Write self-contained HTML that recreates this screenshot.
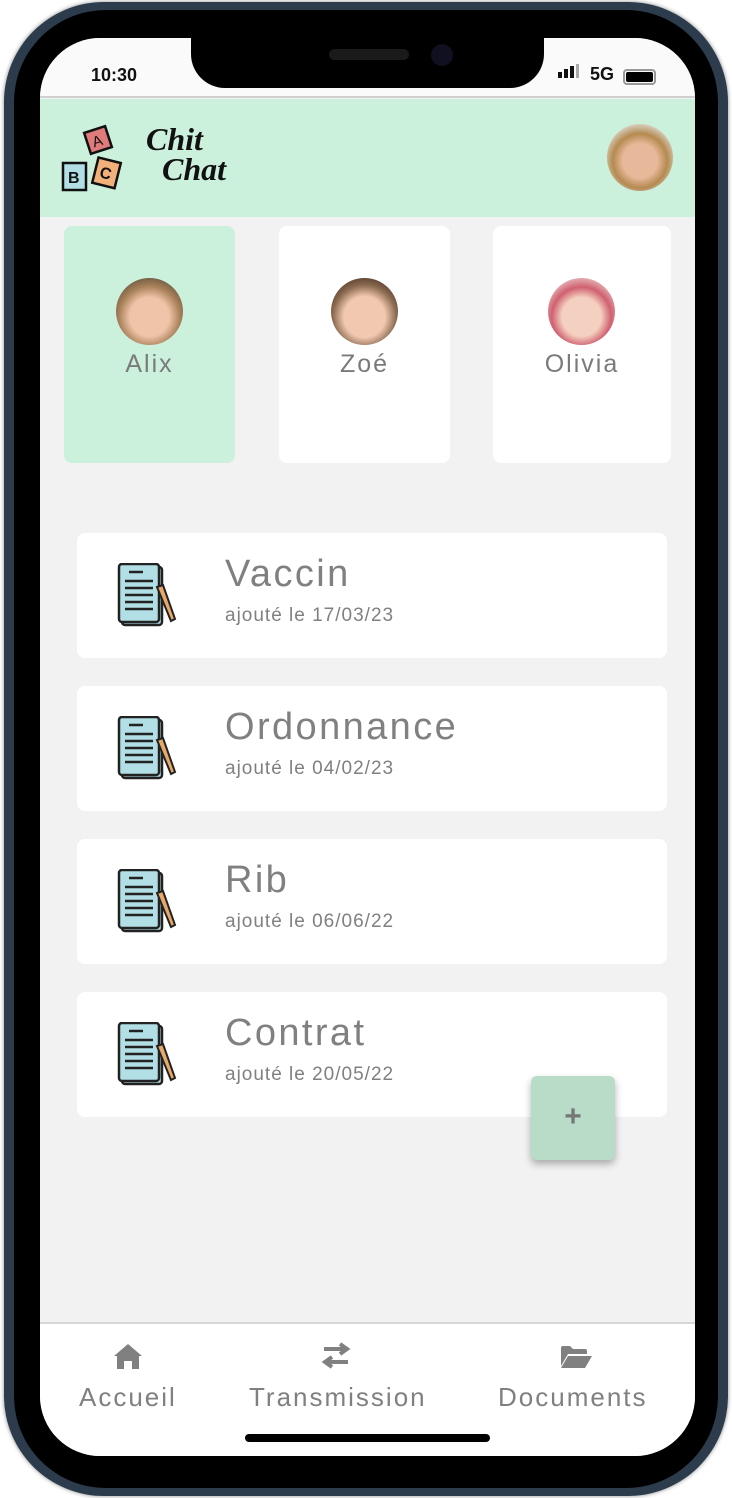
<!DOCTYPE html>
<html><head><meta charset="utf-8"><style>
*{margin:0;padding:0;box-sizing:border-box}
body{width:732px;height:1498px;background:#fff;position:relative;overflow:hidden;font-family:"Liberation Sans",sans-serif;color:#7a7a7a}
.phone{position:absolute;left:4px;top:2px;width:724px;height:1494px;border-radius:100px;background:#2c3c4c;box-shadow:0 0 4px #888}
.bezel{position:absolute;left:10px;top:8px;right:10px;bottom:8px;border-radius:92px;background:#000}
.screen{position:absolute;left:40px;top:38px;width:655px;height:1418px;border-radius:60px;overflow:hidden;background:#f3f2f3}
.status{position:absolute;left:0;top:0;width:100%;height:60px;background:#fafafa;border-bottom:2px solid #cfcfcf}
.notch{position:absolute;left:151px;top:-2px;width:353px;height:52px;background:#000;border-radius:0 0 34px 34px}
.header{position:absolute;top:61px;left:0;width:100%;height:118px;background:#cbf0dc}
.card{position:absolute;top:188px;height:237px;background:#fff;border-radius:8px}
.av{position:absolute;left:50%;top:52px;margin-left:-34px;width:67px;height:67px;border-radius:50%}
.name{position:absolute;top:124px;width:100%;text-align:center;font-size:25px;letter-spacing:2px}
.doc{position:absolute;left:37px;width:590px;height:125px;background:#fff;border-radius:8px}
.doc .t{position:absolute;left:148px;top:20px;font-size:38px;color:#808080;letter-spacing:2.4px}
.doc .s{position:absolute;left:148px;top:72px;font-size:19px;color:#808080;letter-spacing:1px}
.doc svg{position:absolute;left:40px;top:30px}
.nav{position:absolute;top:1284px;left:0;width:100%;height:134px;background:#fff;border-top:2px solid #d6d6d6}
.nav div{position:absolute;top:58px;font-size:26px;color:#808080;letter-spacing:2px}
</style></head><body>
<div class="phone"><div class="bezel"></div></div>
<div class="screen">
 <div class="status">
  <div style="position:absolute;left:51px;top:27px;font-size:18px;font-weight:bold;color:#111">10:30</div>
  <div class="notch"><div style="position:absolute;left:138px;top:13px;width:80px;height:11px;border-radius:6px;background:#1a1a1a"></div><div style="position:absolute;left:240px;top:8px;width:22px;height:22px;border-radius:50%;background:#101020"></div></div>
  <div style="position:absolute;left:518px;top:34px;width:4px;height:6px;background:#111"></div>
  <div style="position:absolute;left:524px;top:31px;width:4px;height:9px;background:#111"></div>
  <div style="position:absolute;left:530px;top:28px;width:4px;height:12px;background:#111"></div>
  <div style="position:absolute;left:536px;top:26px;width:3px;height:14px;background:#aaa"></div>
  <div style="position:absolute;left:550px;top:26px;font-size:18px;font-weight:bold;color:#111">5G</div>
  <div style="position:absolute;left:583px;top:31px;width:33px;height:16px;border:2px solid #999;border-radius:4px;padding:1px"><div style="width:100%;height:100%;background:#000;border-radius:2px"></div></div>
 </div>
 <div class="header">
  <svg width="70" height="70" style="position:absolute;left:21px;top:25px" viewBox="0 0 70 70">
   <g transform="rotate(-18 37 16)"><rect x="26" y="5" width="22" height="22" fill="#e07b7b" stroke="#111" stroke-width="2.5"/><text x="31" y="22" font-family="Liberation Sans" font-size="15" fill="#111">A</text></g>
   <rect x="2" y="39" width="23" height="27" fill="#b2dfe6" stroke="#111" stroke-width="2.5"/><text x="7" y="59" font-family="Liberation Sans" font-weight="bold" font-size="16" fill="#111">B</text>
   <g transform="rotate(14 46 49)"><rect x="34" y="36" width="23" height="26" fill="#f2b07a" stroke="#111" stroke-width="2.5"/><text x="39" y="55" font-family="Liberation Sans" font-weight="bold" font-size="16" fill="#111">C</text></g>
  </svg>
  <div style="position:absolute;left:106px;top:25px;font-family:'Liberation Serif',serif;font-style:italic;font-weight:bold;font-size:32px;line-height:30px;color:#111">Chit<br><span style="margin-left:16px">Chat</span></div>
  <div style="position:absolute;left:567px;top:25px;width:66px;height:67px;border-radius:50%;background:radial-gradient(circle at 50% 55%,#e8b89a 0 35%,#b58a50 55%,#d8d0c0 75%)"></div>
 </div>
 <div class="card" style="left:24px;width:171px;background:#cbf0dc"><div class="av" style="background:radial-gradient(circle at 50% 58%,#f0c4a8 0 38%,#a8805a 60%,#6a5a40 80%)"></div><div class="name">Alix</div></div>
 <div class="card" style="left:239px;width:171px"><div class="av" style="background:radial-gradient(circle at 50% 58%,#f2c8b0 0 40%,#8a6a50 62%,#5a4030 80%)"></div><div class="name">Zoé</div></div>
 <div class="card" style="left:453px;width:178px"><div class="av" style="background:radial-gradient(circle at 50% 58%,#f4d0c0 0 38%,#d06070 58%,#e8c0c0 80%)"></div><div class="name">Olivia</div></div>

 <div class="doc" style="top:495px"><svg width="62" height="66" viewBox="0 0 62 66"><rect x="5" y="4" width="40" height="58" rx="3" fill="#b2dfe6" stroke="#222" stroke-width="2.5"/><rect x="2" y="1" width="40" height="58" rx="3" fill="#b2dfe6" stroke="#222" stroke-width="2.5"/><g stroke="#222" stroke-width="2.5"><line x1="12" y1="9" x2="26" y2="9"/><line x1="8" y1="18" x2="36" y2="18"/><line x1="8" y1="25" x2="36" y2="25"/><line x1="8" y1="32" x2="36" y2="32"/><line x1="8" y1="39" x2="36" y2="39"/><line x1="8" y1="46" x2="36" y2="46"/></g><path d="M40 24 L46 22 L58 56 L54 58 Z" fill="#e9a86a" stroke="#222" stroke-width="2"/></svg><div class="t">Vaccin</div><div class="s">ajouté le 17/03/23</div></div>
 <div class="doc" style="top:648px"><svg width="62" height="66" viewBox="0 0 62 66"><rect x="5" y="4" width="40" height="58" rx="3" fill="#b2dfe6" stroke="#222" stroke-width="2.5"/><rect x="2" y="1" width="40" height="58" rx="3" fill="#b2dfe6" stroke="#222" stroke-width="2.5"/><g stroke="#222" stroke-width="2.5"><line x1="12" y1="9" x2="26" y2="9"/><line x1="8" y1="18" x2="36" y2="18"/><line x1="8" y1="25" x2="36" y2="25"/><line x1="8" y1="32" x2="36" y2="32"/><line x1="8" y1="39" x2="36" y2="39"/><line x1="8" y1="46" x2="36" y2="46"/></g><path d="M40 24 L46 22 L58 56 L54 58 Z" fill="#e9a86a" stroke="#222" stroke-width="2"/></svg><div class="t">Ordonnance</div><div class="s">ajouté le 04/02/23</div></div>
 <div class="doc" style="top:801px"><svg width="62" height="66" viewBox="0 0 62 66"><rect x="5" y="4" width="40" height="58" rx="3" fill="#b2dfe6" stroke="#222" stroke-width="2.5"/><rect x="2" y="1" width="40" height="58" rx="3" fill="#b2dfe6" stroke="#222" stroke-width="2.5"/><g stroke="#222" stroke-width="2.5"><line x1="12" y1="9" x2="26" y2="9"/><line x1="8" y1="18" x2="36" y2="18"/><line x1="8" y1="25" x2="36" y2="25"/><line x1="8" y1="32" x2="36" y2="32"/><line x1="8" y1="39" x2="36" y2="39"/><line x1="8" y1="46" x2="36" y2="46"/></g><path d="M40 24 L46 22 L58 56 L54 58 Z" fill="#e9a86a" stroke="#222" stroke-width="2"/></svg><div class="t">Rib</div><div class="s">ajouté le 06/06/22</div></div>
 <div class="doc" style="top:954px"><svg width="62" height="66" viewBox="0 0 62 66"><rect x="5" y="4" width="40" height="58" rx="3" fill="#b2dfe6" stroke="#222" stroke-width="2.5"/><rect x="2" y="1" width="40" height="58" rx="3" fill="#b2dfe6" stroke="#222" stroke-width="2.5"/><g stroke="#222" stroke-width="2.5"><line x1="12" y1="9" x2="26" y2="9"/><line x1="8" y1="18" x2="36" y2="18"/><line x1="8" y1="25" x2="36" y2="25"/><line x1="8" y1="32" x2="36" y2="32"/><line x1="8" y1="39" x2="36" y2="39"/><line x1="8" y1="46" x2="36" y2="46"/></g><path d="M40 24 L46 22 L58 56 L54 58 Z" fill="#e9a86a" stroke="#222" stroke-width="2"/></svg><div class="t">Contrat</div><div class="s">ajouté le 20/05/22</div></div>

 <div style="position:absolute;left:491px;top:1038px;width:84px;height:84px;border-radius:6px;background:#b9dcc8;box-shadow:0 4px 8px rgba(0,0,0,.3);text-align:center;line-height:82px;font-size:30px;font-weight:bold;color:#777">+</div>

 <div class="nav">
  <svg width="32" height="28" style="position:absolute;left:72px;top:18px" viewBox="0 0 32 28"><path d="M16 2 L30 14 L27 14 L27 27 L20 27 L20 19 L12 19 L12 27 L5 27 L5 14 L2 14 Z" fill="#808080"/></svg>
  <svg width="32" height="28" style="position:absolute;left:280px;top:18px" viewBox="0 0 32 28"><path d="M4 7 H24 M20 2 L27 7 L20 12" stroke="#808080" stroke-width="4" fill="none"/><path d="M28 20 H8 M12 15 L5 20 L12 25" stroke="#808080" stroke-width="4" fill="none"/></svg>
  <svg width="34" height="26" style="position:absolute;left:519px;top:20px" viewBox="0 0 34 26"><path d="M2 4 Q2 2 4 2 H11 L14 5 H26 Q28 5 28 7 V10 H9 L2 22 Z" fill="#808080"/><path d="M9 12 H33 L26 24 H2 Z" fill="#808080"/></svg>
  <div style="left:39px">Accueil</div>
  <div style="left:209px">Transmission</div>
  <div style="left:458px">Documents</div>
  <div style="position:absolute;left:205px;top:110px;width:245px;height:8px;border-radius:4px;background:#000"></div>
 </div>
</div>
</body></html>
